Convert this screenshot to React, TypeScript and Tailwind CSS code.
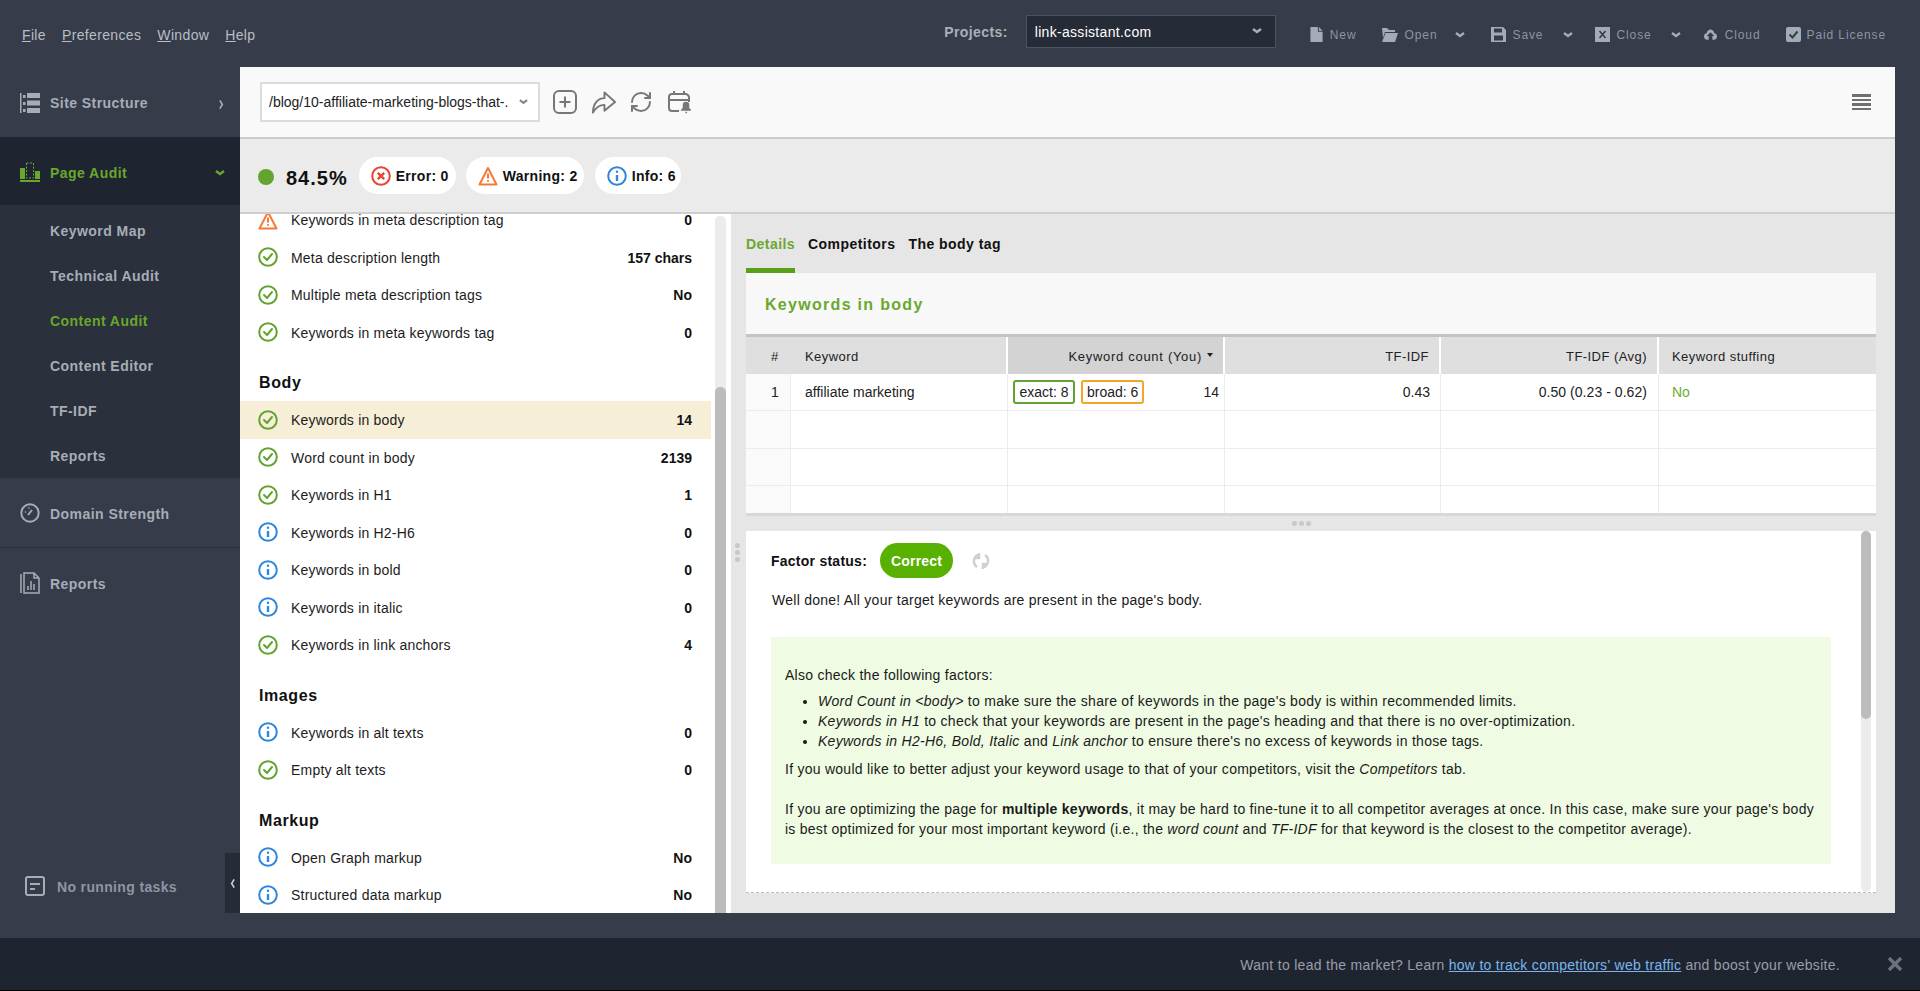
import { RefreshCw } from "lucide-react";

type Status = "ok" | "info" | "warn";
type Factor = { label: string; value: string; status: Status; active?: boolean };

function Chevron({ className }: { className: string }) {
  return (
    <svg viewBox="0 0 10 6" className={className} fill="none" stroke="currentColor" strokeWidth="2.4">
      <path d="M1 1l4 3 4-3" />
    </svg>
  );
}

function StatusIcon({ status }: { status: Status }) {
  if (status === "ok") {
    return (
      <svg viewBox="0 0 20 20" className="h-5 w-5 shrink-0" fill="none" stroke="#63a32f" strokeWidth="2">
        <circle cx="10" cy="10" r="8.8" />
        <path d="M6 10l3 3 5-6" strokeLinecap="round" strokeLinejoin="round" />
      </svg>
    );
  }
  if (status === "info") {
    return (
      <svg viewBox="0 0 20 20" className="h-5 w-5 shrink-0" fill="none" stroke="#2f86dd" strokeWidth="2">
        <circle cx="10" cy="10" r="8.8" />
        <path d="M10 9v6" strokeWidth="2.4" />
        <circle cx="10" cy="5.8" r="1.2" fill="#2f86dd" stroke="none" />
      </svg>
    );
  }
  return <WarnIcon />;
}

function WarnIcon() {
  return (
    <svg viewBox="0 0 20 20" className="h-5 w-5 shrink-0" fill="none" stroke="#f47b35" strokeWidth="2">
      <path d="M10 2L1.5 18.5h17z" strokeLinejoin="round" />
      <path d="M10 7.5v5" strokeWidth="2" />
      <circle cx="10" cy="15" r="1.1" fill="#f47b35" stroke="none" />
    </svg>
  );
}

function ErrorIcon() {
  return (
    <svg viewBox="0 0 20 20" className="h-5 w-5 shrink-0" fill="none" stroke="#e8432f" strokeWidth="2">
      <circle cx="10" cy="10" r="8.8" />
      <path d="M6.8 6.8l6.4 6.4M13.2 6.8l-6.4 6.4" strokeWidth="2.4" />
    </svg>
  );
}

function FactorRow({ label, value, status, active }: Factor) {
  return (
    <div className={`flex h-[37.5px] items-center pl-[18px] pr-[19px] ${active ? "bg-[#f6eed7]" : ""}`}>
      <StatusIcon status={status} />
      <span className="ml-[13px] flex-1 pt-[2px] tracking-[0.2px] text-[#1c1c1c]">{label}</span>
      <span className="pt-[2px] font-bold text-[#111]">{value}</span>
    </div>
  );
}

function SectionTitle({ title }: { title: string }) {
  return (
    <div className="flex h-[50px] items-end pb-[6px] pl-[19px] text-[16px] font-bold tracking-[0.6px] text-[#111]">
      {title}
    </div>
  );
}

const metaRows: Factor[] = [
  { label: "Keywords in meta description tag", value: "0", status: "warn" },
  { label: "Meta description length", value: "157 chars", status: "ok" },
  { label: "Multiple meta description tags", value: "No", status: "ok" },
  { label: "Keywords in meta keywords tag", value: "0", status: "ok" },
];

const bodyRows: Factor[] = [
  { label: "Keywords in body", value: "14", status: "ok", active: true },
  { label: "Word count in body", value: "2139", status: "ok" },
  { label: "Keywords in H1", value: "1", status: "ok" },
  { label: "Keywords in H2-H6", value: "0", status: "info" },
  { label: "Keywords in bold", value: "0", status: "info" },
  { label: "Keywords in italic", value: "0", status: "info" },
  { label: "Keywords in link anchors", value: "4", status: "ok" },
];

const imageRows: Factor[] = [
  { label: "Keywords in alt texts", value: "0", status: "info" },
  { label: "Empty alt texts", value: "0", status: "ok" },
];

const markupRows: Factor[] = [
  { label: "Open Graph markup", value: "No", status: "info" },
  { label: "Structured data markup", value: "No", status: "info" },
];

function TopBar() {
  const menu = [
    ["F", "ile"],
    ["P", "references"],
    ["W", "indow"],
    ["H", "elp"],
  ];
  return (
    <div className="flex h-[67px] items-center bg-[#363c4a] pl-[22px] pr-[34px]">
      <div className="flex gap-[16px] pt-[4px] tracking-[0.35px] text-[#b9bec6]">
        {menu.map(([a, b]) => (
          <span key={a}>
            <span className="underline">{a}</span>
            {b}
          </span>
        ))}
      </div>
      <div className="mb-[5px] ml-auto flex items-center">
        <span className="pt-[2px] font-bold tracking-[0.4px] text-[#aab0ba]">Projects:</span>
        <div className="ml-[18px] flex h-[33px] w-[250px] items-center justify-between border border-[#4b5260] bg-[#252b37] pl-[8px] pr-[13px] text-white">
          <span className="pt-[2px] tracking-[0.3px]">link-assistant.com</span>
          <Chevron className="h-[6px] w-[10px] text-[#aab0ba]" />
        </div>
      </div>
      <div className="ml-[34px] flex items-center pt-[2px] text-[12px] tracking-[0.9px] text-[#8d95a2]">
        <svg viewBox="0 0 13 16" className="h-[15px] w-[13px]" fill="#a3abb7">
          <path d="M0 0h8v5h5v11H0zM9 0l4 4H9z" />
        </svg>
        <span className="ml-[7px]">New</span>
        <svg viewBox="0 0 16 15" className="ml-[25px] h-[15px] w-[16px]" fill="#a3abb7">
          <path d="M0 1h5l2 2h6v2H3L1 11zM3.5 6H16l-3 9H0z" />
        </svg>
        <span className="ml-[7px]">Open</span>
        <Chevron className="ml-[18px] h-[6px] w-[10px] text-[#a3abb7]" />
        <svg viewBox="0 0 15 15" className="ml-[26px] h-[15px] w-[15px]" fill="#a3abb7">
          <path d="M0 0h12l3 3v12H0zM3 1.5v4h8v-4zM3 8.5v5h9v-5z" fillRule="evenodd" />
        </svg>
        <span className="ml-[6px]">Save</span>
        <Chevron className="ml-[20px] h-[6px] w-[10px] text-[#a3abb7]" />
        <svg viewBox="0 0 15 15" className="ml-[22px] h-[15px] w-[15px]">
          <rect width="15" height="15" fill="#a3abb7" />
          <path d="M4.5 4l6 7M10.5 4l-6 7" stroke="#363c4a" strokeWidth="1.6" />
        </svg>
        <span className="ml-[6px]">Close</span>
        <Chevron className="ml-[19px] h-[6px] w-[10px] text-[#a3abb7]" />
        <svg viewBox="0 0 14 12" className="ml-[23px] h-[12px] w-[13px]" fill="#a3abb7">
          <path d="M7 0C9 0 11 2 11 4c2 0 3 1.500 3 3.500S12.500 11 11 11H9V7h2L7 3 3 7h2v4H3C1.500 11 0 9.500 0 7.500S1 4 3 4c0-2 2-4 4-4z" />
        </svg>
        <span className="ml-[8px]">Cloud</span>
        <svg viewBox="0 0 15 15" className="ml-[26px] h-[15px] w-[15px]">
          <rect width="15" height="15" rx="2" fill="#a3abb7" />
          <path d="M3.500 7.500l3 3 5-6" stroke="#363c4a" strokeWidth="2" fill="none" />
        </svg>
        <span className="ml-[5px]">Paid License</span>
      </div>
    </div>
  );
}

function SideItem({
  icon,
  label,
  chevron,
  border,
}: {
  icon: React.ReactNode;
  label: string;
  chevron?: boolean;
  border?: boolean;
}) {
  return (
    <div
      className={`flex h-[70px] items-center pl-[20px] pr-[15px] font-bold tracking-[0.45px] text-[#a7adb7] ${
        border ? "border-b border-[#2b303c]" : ""
      }`}
    >
      {icon}
      <span className="ml-[10px] pt-[3px]">{label}</span>
      {chevron && (
        <svg viewBox="0 0 6 12" className="ml-auto mr-[1px] mt-[5px] h-[11px] w-[5px]" fill="none" stroke="#a7adb7" strokeWidth="2">
          <path d="M1 1l3 5-3 5" />
        </svg>
      )}
    </div>
  );
}

function Sidebar() {
  const subItems = ["Keyword Map", "Technical Audit", "Content Audit", "Content Editor", "TF-IDF", "Reports"];
  return (
    <div className="flex w-[240px] shrink-0 flex-col pb-[25px]">
      <SideItem
        label="Site Structure"
        chevron
        icon={
          <svg viewBox="0 0 20 20" className="mt-[1px] h-[20px] w-[20px]" fill="#a7adb7">
            <path d="M0 0h1.500v20H0zM3 2h2.500v3H3zM3 9h2.500v3H3zM3 16h2.500v3H3zM7 0h13v5H7zM7 7.500h13v5H7zM7 15h13v5H7z" />
          </svg>
        }
      />
      <div className="flex h-[68px] items-center bg-[#1f2530] pl-[20px] pr-[15px] font-bold tracking-[0.45px] text-[#69a72c]">
        <svg viewBox="0 0 20 20" className="mt-[1px] h-[20px] w-[20px]" fill="#69a72c">
          <path d="M0 6h5v11H0zM15 9h5v8h-5zM0 18h20v2H0z" />
          <rect x="6.500" y="1" width="7" height="15" fill="none" stroke="#69a72c" strokeDasharray="2 1.500" />
        </svg>
        <span className="ml-[10px] pt-[4px]">Page Audit</span>
        <Chevron className="ml-auto mt-[3px] h-[6px] w-[10px]" />
      </div>
      <div className="flex flex-col bg-[#2a303c] pt-[3px]">
        {subItems.map((item) => (
          <div
            key={item}
            className={`flex h-[45px] items-center pl-[50px] pt-[1px] font-bold tracking-[0.45px] ${
              item === "Content Audit" ? "text-[#69a72c]" : "text-[#a7adb7]"
            }`}
          >
            {item}
          </div>
        ))}
      </div>
      <SideItem
        label="Domain Strength"
        border
        icon={
          <svg viewBox="0 0 20 20" className="h-[20px] w-[20px]" fill="none" stroke="#a7adb7" strokeWidth="2">
            <circle cx="10" cy="10" r="8.700" />
            <path d="M8 12l4-5" />
            <circle cx="5.500" cy="9" r="0.800" fill="#a7adb7" stroke="none" />
            <circle cx="9" cy="5" r="0.800" fill="#a7adb7" stroke="none" />
          </svg>
        }
      />
      <SideItem
        label="Reports"
        icon={
          <svg viewBox="0 0 20 22" className="h-[22px] w-[20px]" fill="none" stroke="#a7adb7" strokeWidth="1.500">
            <path d="M1 2v19M4 1h10l5 5v15H4zM14 1v5h5" />
            <path d="M8 18v-4M11 18V9M14 18v-6" />
          </svg>
        }
      />
      <div className="mt-auto flex h-[60px] items-start justify-between">
        <div className="mt-[21px] flex items-center pl-[25px] font-bold tracking-[0.35px] text-[#8f96a2]">
          <svg viewBox="0 0 20 20" className="h-[20px] w-[20px]" fill="none" stroke="#a7adb7" strokeWidth="2">
            <rect x="1" y="1" width="18" height="18" rx="2" />
            <path d="M5 8h10M5 13h5" />
          </svg>
          <span className="ml-[12px] pt-[3px]">No running tasks</span>
        </div>
        <div className="flex h-[60px] w-[15px] items-center justify-center bg-[#252b37]">
          <svg viewBox="0 0 6 12" className="h-[11px] w-[5px]" fill="none" stroke="#c7ccd3" strokeWidth="2">
            <path d="M5 1L2 6l3 5" />
          </svg>
        </div>
      </div>
    </div>
  );
}

function Toolbar() {
  return (
    <div className="flex h-[72px] shrink-0 items-center border-b-2 border-[#cccccc] bg-[#f9f9f9] pl-[20px] pr-[24px]">
      <div className="flex h-[40px] w-[280px] items-center border-2 border-[#dcdcdc] bg-white pl-[7px] text-[14px] text-[#222]">
        <span className="pt-[1px]">/blog/10-affiliate-marketing-blogs-that-.</span>
        <Chevron className="ml-[11px] h-[6px] w-[9px] text-[#888]" />
      </div>
      <svg viewBox="0 0 24 24" className="ml-[13px] h-[24px] w-[24px]" fill="none" stroke="#777" strokeWidth="2">
        <rect x="1" y="1" width="22" height="22" rx="5" />
        <path d="M12 6.500v11M6.500 12h11" />
      </svg>
      <svg viewBox="0 0 26 24" className="ml-[14px] h-[24px] w-[25px]" fill="none" stroke="#777" strokeWidth="2" strokeLinejoin="round">
        <path d="M2 23C2 14 7 8 14 8V2l11 10-11 9v-6C8 15 5 18 2 23z" />
      </svg>
      <RefreshCw className="ml-[13px] h-[24px] w-[24px] text-[#777]" strokeWidth={2} />
      <svg viewBox="0 0 24 24" className="ml-[14px] h-[24px] w-[24px]" fill="none" stroke="#777" strokeWidth="2">
        <path d="M12 21H5a3 3 0 0 1-3-3V7a3 3 0 0 1 3-3h13a4 4 0 0 1 4 3v5M2 10h20M7 1v4M17 1v4" />
        <path d="M15 20h8l-1.500-2v-3a2.500 2.500 0 0 0-5 0v3zM18.500 22.500h1.500" fill="#777" strokeWidth="1.500" />
      </svg>
      <div className="ml-auto flex w-[19px] flex-col gap-[2px]">
        {[0, 1, 2, 3].map((n) => (
          <span key={n} className="h-[2.500px] bg-[#6f6f6f]" />
        ))}
      </div>
    </div>
  );
}

function StatusBar() {
  const pillClass = "flex h-[37px] items-center rounded-full bg-white pl-[12px] font-bold tracking-[0.3px] text-[#111]";
  return (
    <div className="flex h-[75px] shrink-0 items-center border-b-2 border-[#cfcfcf] bg-[#ebebeb] pl-[18px]">
      <span className="mt-[2px] h-[16px] w-[16px] rounded-full bg-[#63a32f]" />
      <span className="ml-[12px] mt-[4px] text-[20px] font-bold tracking-[1px] text-[#111]">84.5%</span>
      <div className="ml-[11px] flex gap-[10px]">
        <div className={`${pillClass} w-[97px]`}>
          <ErrorIcon />
          <span className="ml-[5px] pt-[2px]">Error: 0</span>
        </div>
        <div className={`${pillClass} w-[118px]`}>
          <WarnIcon />
          <span className="ml-[5px] pt-[2px]">Warning: 2</span>
        </div>
        <div className={`${pillClass} ml-[1px] w-[86px]`}>
          <StatusIcon status="info" />
          <span className="ml-[5px] pt-[2px]">Info: 6</span>
        </div>
      </div>
    </div>
  );
}

function FactorList() {
  return (
    <div className="relative w-[491px] shrink-0 overflow-hidden bg-white">
      <div className="-mt-[13px] w-[471px]">
        {metaRows.map((row) => (
          <FactorRow key={row.label} {...row} />
        ))}
        <SectionTitle title="Body" />
        {bodyRows.map((row) => (
          <FactorRow key={row.label} {...row} />
        ))}
        <SectionTitle title="Images" />
        {imageRows.map((row) => (
          <FactorRow key={row.label} {...row} />
        ))}
        <SectionTitle title="Markup" />
        {markupRows.map((row) => (
          <FactorRow key={row.label} {...row} />
        ))}
      </div>
      {/* scrollbar */}
      <div className="absolute bottom-0 left-[475px] top-[2px] w-[11px] rounded-t-[5px] bg-[#ececec]">
        <div className="absolute bottom-0 h-[526px] w-full rounded-t-[5px] bg-[#bcbcbc]" />
      </div>
    </div>
  );
}

const gridCols = "grid grid-cols-[45px_217px_217px_216px_218px_1fr]";

function KeywordTable() {
  const empty = [0, 1, 2, 3, 4, 5];
  return (
    <div className="border-t-[3px] border-[#c4c4c4]">
      <div className={`${gridCols} h-[37px] bg-[#dfdfdf] text-[13px] tracking-[0.45px] text-[#222]`}>
        <div className="flex items-center pl-[25px] pt-[2px]">#</div>
        <div className="flex items-center border-r-2 border-white pl-[14px] pt-[2px]">Keyword</div>
        <div className="flex items-center justify-end border-r-2 border-white bg-[#d3d3d3] pr-[10px] pt-[2px] tracking-[0.7px]">
          Keyword count (You)
          <span className="ml-[5px] mt-[-3px] h-0 w-0 border-x-[3.500px] border-t-[4px] border-x-transparent border-t-[#222]" />
        </div>
        <div className="flex items-center justify-end border-r-2 border-white pr-[10px] pt-[2px]">TF-IDF</div>
        <div className="flex items-center justify-end border-r-2 border-white pr-[10px] pt-[2px]">TF-IDF (Avg)</div>
        <div className="flex items-center pl-[13px] pt-[2px]">Keyword stuffing</div>
      </div>
      <div className={`${gridCols} h-[37px] border-b border-[#ececec] bg-white text-[#222]`}>
        <div className="flex items-center border-r border-[#ececec] bg-[#fafafa] pl-[25px]">1</div>
        <div className="flex items-center border-r border-[#ececec] pl-[14px]">affiliate marketing</div>
        <div className="flex items-center border-r border-[#ececec] pl-[5px] pr-[5px]">
          <span className="rounded-[3px] border-2 border-[#63a32f] px-[4.5px] py-[1px] leading-[18px]">exact: 8</span>
          <span className="ml-[6px] rounded-[3px] border-2 border-[#f6a32a] px-[4px] py-[1px] leading-[18px]">broad: 6</span>
          <span className="ml-auto">14</span>
        </div>
        <div className="flex items-center justify-end border-r border-[#ececec] pr-[10px]">0.43</div>
        <div className="flex items-center justify-end border-r border-[#ececec] pr-[11px] tracking-[0.05px]">0.50 (0.23 - 0.62)</div>
        <div className="flex items-center pl-[13px] text-[#6faa2d]">No</div>
      </div>
      {[38, 38, 27].map((h, i) => (
        <div
          key={i}
          className={`${gridCols} bg-white ${i < 2 ? "border-b border-[#ececec]" : ""} ${
            h === 27 ? "h-[27px]" : "h-[37.500px]"
          }`}
        >
          {empty.map((c) => (
            <div key={c} className={`${c === 0 ? "bg-[#fafafa]" : ""} ${c < 5 ? "border-r border-[#ececec]" : ""}`} />
          ))}
        </div>
      ))}
      <div className="h-[3px] bg-[#d8d8d8]" />
    </div>
  );
}

function Dots({ vertical }: { vertical?: boolean }) {
  return (
    <div className={`flex gap-[2px] ${vertical ? "flex-col" : ""}`}>
      {[0, 1, 2].map((n) => (
        <span key={n} className="h-[5px] w-[5px] rounded-full bg-[#c8c8c8]" />
      ))}
    </div>
  );
}

function DetailPanel() {
  return (
    <div className="relative flex min-w-0 flex-1 flex-col bg-[#e6e6e6] pl-[15px] pr-[19px]">
      <div className="flex h-[59px] shrink-0 items-stretch gap-[13px] font-bold tracking-[0.45px]">
        <div className="flex items-center border-b-[5px] border-[#5a9f19] pt-[6px] text-[#6aa82e]">Details</div>
        <div className="flex items-center pb-[5px] pt-[6px] text-[#111]">Competitors</div>
        <div className="flex items-center pb-[5px] pt-[6px] text-[#111]">The body tag</div>
      </div>
      <div className="flex h-[61px] shrink-0 items-center bg-[#f8f8f8] pl-[19px] pt-[2px] text-[16px] font-bold tracking-[1.3px] text-[#6aa82e]">
        Keywords in body
      </div>
      <KeywordTable />
      <div className="flex h-[15px] shrink-0 items-center justify-center pr-[20px]">
        <Dots />
      </div>
      <div className="relative flex h-[362px] shrink-0 flex-col border-b border-dashed border-[#bcbcbc] bg-white pl-[25px] text-[#1a1a1a]">
        <div className="mt-[12px] flex h-[35px] items-center">
          <span className="pt-[1px] font-bold tracking-[0.25px] text-[#111]">Factor status:</span>
          <span className="ml-[13px] flex h-[35px] w-[73px] items-center justify-center rounded-[18px] bg-[#58b000] pt-[1px] font-bold tracking-[0.2px] text-white">
            Correct
          </span>
          <svg viewBox="0 0 18 18" className="ml-[19px] h-[18px] w-[18px]" fill="none" stroke="#d0d0d0" strokeWidth="2.500">
            <path d="M5 15A7 7 0 0 1 7 2.500M13 3a7 7 0 0 1-2 12.500M7 1v5H2M11 17v-5h5" />
          </svg>
        </div>
        <p className="mt-[12px] pl-[1px] tracking-[0.26px]">Well done! All your target keywords are present in the page's body.</p>
        <div className="mt-[26px] h-[227px] w-[1060px] bg-[#f0fbe3] pl-[14px] pr-[16px] pt-[28px] leading-[20px] tracking-[0.26px]">
          <p>Also check the following factors:</p>
          <ul className="mt-[6px] list-disc pl-[33px] tracking-[0.28px]">
            <li>
              <em>Word Count in &lt;body&gt;</em> to make sure the share of keywords in the page's body is within recommended limits.
            </li>
            <li>
              <em>Keywords in H1</em> to check that your keywords are present in the page's heading and that there is no over-optimization.
            </li>
            <li>
              <em>Keywords in H2-H6, Bold, Italic</em> and <em>Link anchor</em> to ensure there's no excess of keywords in those tags.
            </li>
          </ul>
          <p className="mt-[8px]">
            If you would like to better adjust your keyword usage to that of your competitors, visit the <em>Competitors</em> tab.
          </p>
          <p className="mt-[20px]">
            If you are optimizing the page for <strong>multiple keywords</strong>, it may be hard to fine-tune it to all competitor averages at once. In this case, make sure your page's body is best optimized for your most important keyword (i.e., the <em>word count</em> and <em>TF-IDF</em> for that keyword is the closest to the competitor average).
          </p>
        </div>
        {/* scrollbar */}
        <div className="absolute bottom-0 right-[5px] top-[0px] w-[10px] rounded-[5px] bg-[#ececec]">
          <div className="h-[188px] rounded-[5px] bg-[#bcbcbc]" />
        </div>
      </div>
      <div className="absolute left-[4px] top-[329px]">
        <Dots vertical />
      </div>
    </div>
  );
}

function Banner() {
  return (
    <div className="flex h-[53px] shrink-0 items-center justify-end border-b border-black bg-[#1f2530] pr-[18px] tracking-[0.29px] text-[#999ea7]">
      <span className="pt-[2px]">
        Want to lead the market? Learn{" "}
        <span className="text-[#79b6ee] underline">how to track competitors' web traffic</span> and boost your website.
      </span>
      <svg viewBox="0 0 14 14" className="ml-[48px] h-[14px] w-[14px]" fill="none" stroke="#6c717b" strokeWidth="3.400">
        <path d="M1 1l12 12M13 1L1 13" />
      </svg>
    </div>
  );
}

export default function App() {
  return (
    <div className="flex h-[991px] flex-col overflow-hidden bg-[#363c4a] font-['Liberation_Sans',Arial,sans-serif] text-[14px]">
      <TopBar />
      <div className="flex min-h-0 flex-1">
        <Sidebar />
        <div className="mb-[25px] mr-[25px] flex min-w-0 flex-1 flex-col">
          <Toolbar />
          <StatusBar />
          <div className="flex min-h-0 flex-1">
            <FactorList />
            <DetailPanel />
          </div>
        </div>
      </div>
      <Banner />
    </div>
  );
}
